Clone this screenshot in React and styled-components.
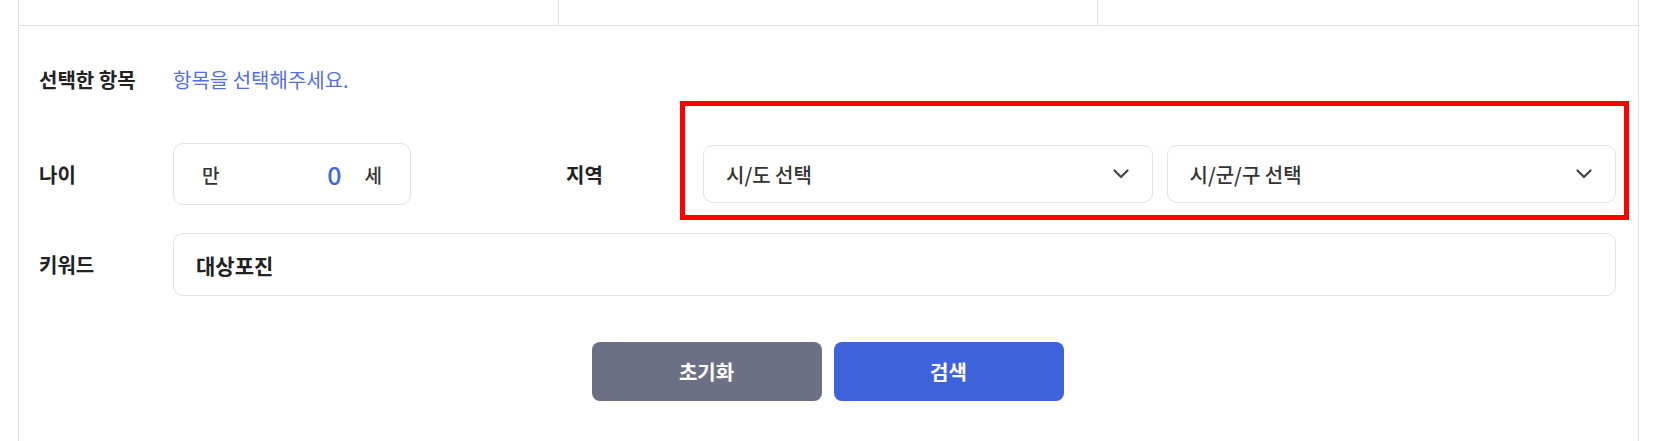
import React from 'react';
import styled, { createGlobalStyle } from 'styled-components';

const GlobalStyle = createGlobalStyle`
    body {
        margin: 0;
        background: #fff;
        font-family: 'Noto Sans CJK KR', 'Noto Sans', sans-serif;
        color: #222;
    }
`;

// 바깥 패널
const Panel = styled.div`
    width: 1621px;
    margin-left: 18px;
    box-sizing: border-box;
    border-left: 1px solid #e0e0e8;
    border-right: 1px solid #e0e0e8;
    min-height: 441px;
`;

// 상단 표의 마지막 줄
const TableRow = styled.div`
    display: grid;
    grid-template-columns: 1fr 1fr 1fr;
    height: 26px;
    box-sizing: border-box;
    border-bottom: 1px solid #e0e0e8;
`;

const TableCell = styled.div`
    border-right: ${p => (p.last ? 'none' : '1px solid #e0e0e8')};
`;

// 검색 폼
const Form = styled.div`
    padding: 31px 22px 0 20px;
    display: flex;
    flex-direction: column;
`;

const Row = styled.div`
    display: flex;
    align-items: center;
    height: ${p => p.h}px;
    margin-top: ${p => p.gap || 0}px;
    position: relative;
`;

const Label = styled.div`
    width: ${p => p.w || 134}px;
    margin-left: ${p => p.ml || 0}px;
    flex-shrink: 0;
    font-size: 20px;
    font-weight: 700;
    color: #222;
`;

const Placeholder = styled.div`
    font-size: 20px;
    color: #5570d9;
`;

const Box = styled.div`
    box-sizing: border-box;
    height: ${p => p.h || 62}px;
    border: 1px solid #e3e3e6;
    border-radius: 10px;
    background: #fff;
    display: flex;
    align-items: center;
`;

const AgeBox = styled(Box)`
    width: 238px;
    padding: 0 28px 0 28px;
    font-size: 19px;
    font-weight: 500;
    color: #333;
`;

const Spacer = styled.div`
    flex-grow: 1;
`;

const AgeValue = styled.span`
    font-size: 25px;
    font-weight: 500;
    color: #4366dd;
    margin-right: 23px;
`;

const SelectGroup = styled.div`
    flex: 1;
    display: flex;
    gap: 14px;
    position: relative;
`;

const Select = styled(Box)`
    flex: 1;
    padding: 0 23px 0 22px;
    font-size: 20px;
    font-weight: 500;
    color: #333;
    justify-content: space-between;
`;

const KeywordBox = styled(Box)`
    flex: 1;
    padding: 0 22px;
    font-size: 21px;
    font-weight: 700;
    color: #222;
`;

// 빨간 강조 테두리
const Highlight = styled.div`
    position: absolute;
    top: -44px;
    left: -23px;
    right: -13px;
    bottom: -17px;
    border: 5px solid #ff0000;
    pointer-events: none;
`;

const Buttons = styled.div`
    display: flex;
    justify-content: center;
    gap: 12px;
    margin-top: 46px;
`;

const Button = styled.button`
    width: 230px;
    height: 59px;
    border: none;
    border-radius: 8px;
    background: ${p => (p.primary ? '#3e62d9' : '#6d7085')};
    color: #fff;
    font-family: inherit;
    font-size: 20px;
    font-weight: 700;
    cursor: pointer;
`;

const Chevron = () => (
    <svg width="16" height="10" viewBox="0 0 16 10" fill="none">
        <polyline points="1.5,1.5 8,8 14.5,1.5" stroke="#444" strokeWidth="2.2" strokeLinecap="round" strokeLinejoin="round" />
    </svg>
);

const App = () => {
    return (
        <>
            <GlobalStyle />
            <Panel>
                <TableRow>
                    <TableCell />
                    <TableCell />
                    <TableCell last />
                </TableRow>
                <Form>
                    <Row h={44}>
                        <Label>선택한 항목</Label>
                        <Placeholder>항목을 선택해주세요.</Placeholder>
                    </Row>
                    <Row h={62} gap={42}>
                        <Label>나이</Label>
                        <AgeBox>
                            <span>만</span>
                            <Spacer />
                            <AgeValue>0</AgeValue>
                            <span>세</span>
                        </AgeBox>
                        <Label w={137} ml={155}>지역</Label>
                        <SelectGroup>
                            <Select h={58}>
                                <span>시/도 선택</span>
                                <Chevron />
                            </Select>
                            <Select h={58}>
                                <span>시/군/구 선택</span>
                                <Chevron />
                            </Select>
                            <Highlight />
                        </SelectGroup>
                    </Row>
                    <Row h={63} gap={28}>
                        <Label>키워드</Label>
                        <KeywordBox h={63}>대상포진</KeywordBox>
                    </Row>
                    <Buttons>
                        <Button>초기화</Button>
                        <Button primary>검색</Button>
                    </Buttons>
                </Form>
            </Panel>
        </>
    );
};

export default App;
